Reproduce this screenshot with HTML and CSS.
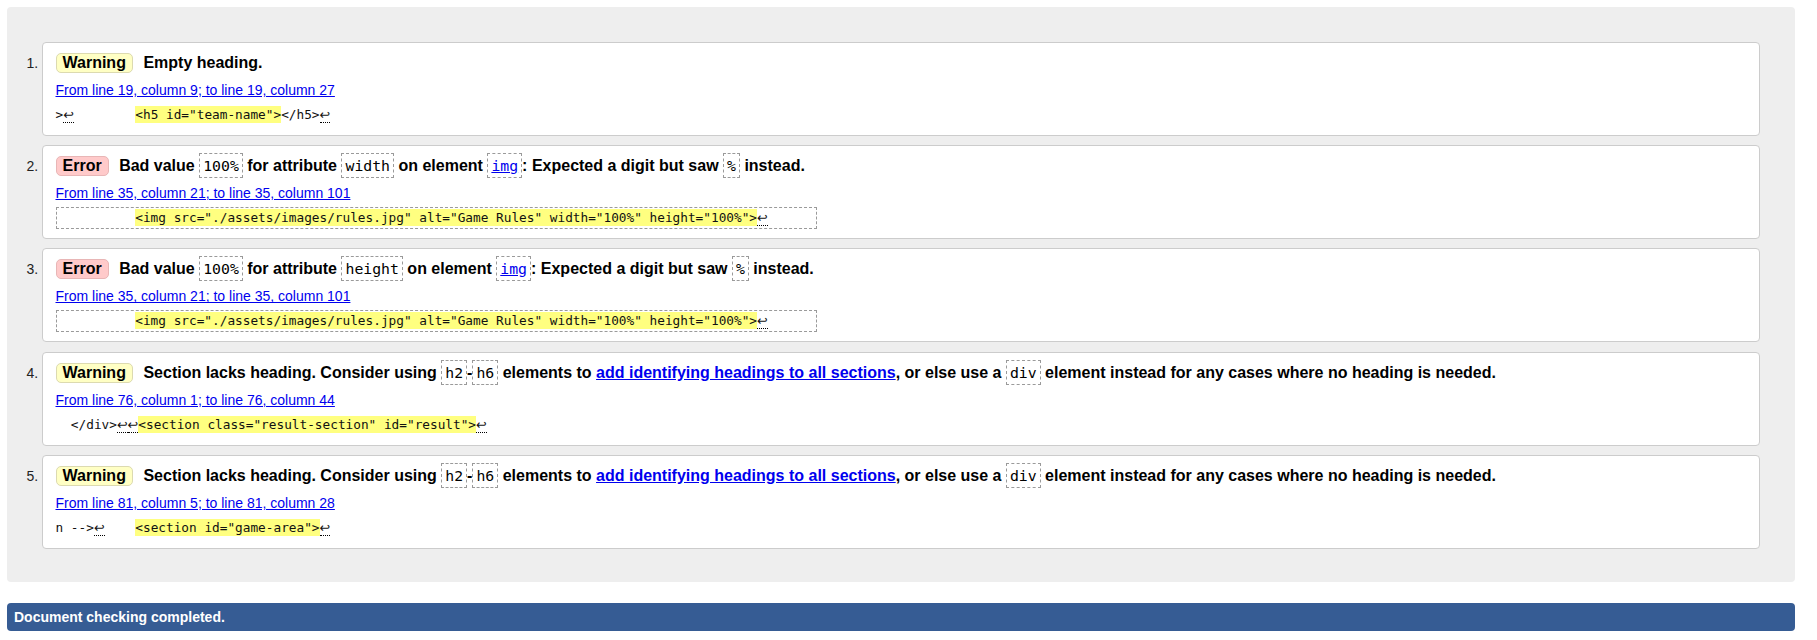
FILE: index.html
```html
<!DOCTYPE html>
<html lang="en">
<head>
<meta charset="utf-8">
<title>Validation results</title>
<link rel="stylesheet" href="styles.css">
</head>
<body>
<div class="results">
  <ol class="list">
    <li class="card">
      <p class="msg"><span class="badge warn">Warning</span><span class="text">Empty heading.</span></p>
      <p class="loc"><a href="#">From line 19, column 9; to line 19, column 27</a></p>
      <p class="extract"><code class="plain">&gt;<b class="lf">↩</b>        <span class="hl">&lt;h5 id="team-name"&gt;</span>&lt;/h5&gt;<b class="lf">↩</b></code></p>
    </li>
    <li class="card">
      <p class="msg"><span class="badge err">Error</span><span class="text">Bad value <code class="ic">100%</code> for attribute <code class="ic">width</code> on element <code class="ic"><a href="#">img</a></code>: Expected a digit but saw <code class="ic">%</code> instead.</span></p>
      <p class="loc"><a href="#">From line 35, column 21; to line 35, column 101</a></p>
      <p class="extract"><code class="box">          <span class="hl">&lt;img src="./assets/images/rules.jpg" alt="Game Rules" width="100%" height="100%"&gt;</span><b class="lf">↩</b>      </code></p>
    </li>
    <li class="card">
      <p class="msg"><span class="badge err">Error</span><span class="text">Bad value <code class="ic">100%</code> for attribute <code class="ic">height</code> on element <code class="ic"><a href="#">img</a></code>: Expected a digit but saw <code class="ic">%</code> instead.</span></p>
      <p class="loc"><a href="#">From line 35, column 21; to line 35, column 101</a></p>
      <p class="extract"><code class="box">          <span class="hl">&lt;img src="./assets/images/rules.jpg" alt="Game Rules" width="100%" height="100%"&gt;</span><b class="lf">↩</b>      </code></p>
    </li>
    <li class="card">
      <p class="msg"><span class="badge warn">Warning</span><span class="text">Section lacks heading. Consider using <code class="ic">h2</code>-<code class="ic">h6</code> elements to <a href="#">add identifying headings to all sections</a>, or else use a <code class="ic">div</code> element instead for any cases where no heading is needed.</span></p>
      <p class="loc"><a href="#">From line 76, column 1; to line 76, column 44</a></p>
      <p class="extract"><code class="plain">  &lt;/div&gt;<b class="lf">↩</b><b class="lf">↩</b><span class="hl">&lt;section class="result-section" id="result"&gt;</span><b class="lf">↩</b></code></p>
    </li>
    <li class="card">
      <p class="msg"><span class="badge warn">Warning</span><span class="text">Section lacks heading. Consider using <code class="ic">h2</code>-<code class="ic">h6</code> elements to <a href="#">add identifying headings to all sections</a>, or else use a <code class="ic">div</code> element instead for any cases where no heading is needed.</span></p>
      <p class="loc"><a href="#">From line 81, column 5; to line 81, column 28</a></p>
      <p class="extract"><code class="plain">n --&gt;<b class="lf">↩</b>    <span class="hl">&lt;section id="game-area"&gt;</span><b class="lf">↩</b></code></p>
    </li>
  </ol>
</div>
<p class="final">Document checking completed.</p>
</body>
</html>
```

FILE: styles.css
```css
html, body {
  background: #ffffff;
}

body {
  margin: 7px 22px 0 7px;
  font-family: "Liberation Sans", Arial, sans-serif;
  color: #000000;
}

.results {
  background: #eeeeee;
  border-radius: 4px;
  padding: 35px 35px 33px 35px;
}

.list {
  margin: 0;
  padding: 0;
  list-style: decimal outside;
}

.card {
  background: #ffffff;
  border: 1px solid #cccccc;
  border-radius: 4px;
  padding: 7px 12px 9px 12.5px;
  margin-bottom: 9.2px;
}

.card:last-child {
  margin-bottom: 0;
}

.card::marker {
  font-family: "Liberation Sans", Arial, sans-serif;
  font-size: 14px;
  color: #222222;
}

.msg {
  margin: 0;
  font-size: 16px;
  font-weight: bold;
  line-height: 25px;
}

.badge {
  display: inline-block;
  padding: 0 6px;
  line-height: 18px;
  border: 1px solid;
  border-radius: 5px;
  margin-right: 10.5px;
}

.warn {
  background: #ffffc4;
  border-color: #dcdab0;
}

.err {
  background: #ffcaca;
  border-color: #e8b6b6;
}

.ic {
  display: inline-block;
  font-family: "DejaVu Sans Mono", "Liberation Mono", monospace;
  font-size: 14.8px;
  font-weight: normal;
  line-height: 19px;
  padding: 2px 3px;
  border: 1px dashed #9a9a9a;
}

a {
  color: #0000ee;
  text-decoration: underline;
}

.loc {
  margin: 6px 0 0;
  font-size: 14px;
  line-height: 18px;
}

.extract {
  margin: 5px 0 0;
  line-height: 0;
}

.extract code {
  display: inline-block;
  font-family: "DejaVu Sans Mono", "Liberation Mono", monospace;
  font-size: 12.75px;
  line-height: 18px;
  white-space: pre;
  color: #111111;
}

.extract .box {
  border: 1px dashed #9a9a9a;
  padding: 1px 2px;
}

.extract .plain {
  padding: 2px 0;
}

.hl {
  background: #ffff80;
  padding: 1px 0;
}

.lf {
  font-family: "DejaVu Sans", sans-serif;
  font-weight: normal;
  border-bottom: 1px dotted #000000;
}

.final {
  margin: 21px 0 0;
  height: 28px;
  line-height: 28px;
  padding: 0 7px;
  background: #365c94;
  border-radius: 4px;
  color: #ffffff;
  font-size: 14px;
  font-weight: bold;
}
```
